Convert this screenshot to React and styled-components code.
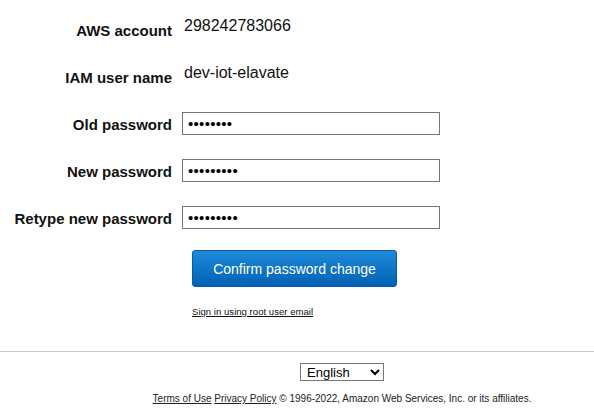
import styled, { createGlobalStyle } from "styled-components";

const GlobalStyle = createGlobalStyle`
  body {
    margin: 0;
    background: #fff;
    font-family: "Liberation Sans", Arial, sans-serif;
    color: #000;
  }
`;

const Main = styled.main`
  height: 351px;
  box-sizing: border-box;
  padding-top: 6px;
`;

const FormGrid = styled.div`
  display: grid;
  grid-template-columns: 172px 1fr;
  grid-auto-rows: 47px;
  column-gap: 10px;
  align-items: center;
`;

const Label = styled.label`
  text-align: right;
  font-size: 15px;
  font-weight: bold;
  color: #111;
  padding-top: 1px;
`;

const Value = styled.span`
  font-size: 16px;
  padding-left: 2px;
  margin-top: -8px;
  color: #111;
`;

const PasswordInput = styled.input`
  box-sizing: border-box;
  width: 258px;
  height: 23px;
  border: 1px solid #767676;
  padding: 1px 5px;
  font-family: "Liberation Sans", Arial, sans-serif;
  font-size: 15px;
  letter-spacing: 0.3px;
  outline: none;
`;

const Actions = styled.div`
  padding-left: 192px;
  padding-top: 9px;
  display: flex;
  flex-direction: column;
  align-items: flex-start;
`;

const ConfirmButton = styled.button`
  box-sizing: border-box;
  width: 205px;
  height: 37px;
  border: 1px solid #0b5aa5;
  border-radius: 3px;
  background: linear-gradient(#2089da, #0062b4);
  color: #fff;
  font-family: "Liberation Sans", Arial, sans-serif;
  font-size: 14px;
  cursor: pointer;
`;

const SmallLink = styled.a`
  margin-top: 19px;
  font-size: 9.6px;
  color: #111;
  text-decoration: underline;
`;

const Footer = styled.footer`
  border-top: 1px solid #ccc;
  padding-left: 90px;
  display: flex;
  flex-direction: column;
  align-items: center;
`;

const LangSelect = styled.select`
  box-sizing: border-box;
  margin-top: 11px;
  width: 84px;
  height: 18px;
  font-family: "Liberation Sans", Arial, sans-serif;
  font-size: 13px;
  border: 1px solid #767676;
  border-radius: 0;
  background: #fff;
  color: #000;
  padding: 0 0 0 2px;
`;

const Legal = styled.p`
  margin: 11px 0 0;
  font-size: 10px;
  line-height: 13px;
  color: #222;
  a {
    color: #222;
    text-decoration: underline;
  }
`;

const fields = [
  { label: "Old password", value: "12345678" },
  { label: "New password", value: "123456789" },
  { label: "Retype new password", value: "123456789" },
];

export default function App() {
  return (
    <>
      <GlobalStyle />
      <Main>
        <FormGrid>
          <Label>AWS account</Label>
          <Value>298242783066</Value>
          <Label>IAM user name</Label>
          <Value>dev-iot-elavate</Value>
          {fields.map((f) => [
            <Label key={f.label + "-label"}>{f.label}</Label>,
            <PasswordInput key={f.label + "-input"} type="password" defaultValue={f.value} />,
          ])}
        </FormGrid>
        <Actions>
          <ConfirmButton>Confirm password change</ConfirmButton>
          <SmallLink href="#">Sign in using root user email</SmallLink>
        </Actions>
      </Main>
      <Footer>
        <LangSelect defaultValue="en">
          <option value="en">English</option>
        </LangSelect>
        <Legal>
          <a href="#">Terms of Use</a> <a href="#">Privacy Policy</a> © 1996-2022, Amazon Web Services, Inc. or its affiliates.
        </Legal>
      </Footer>
    </>
  );
}
